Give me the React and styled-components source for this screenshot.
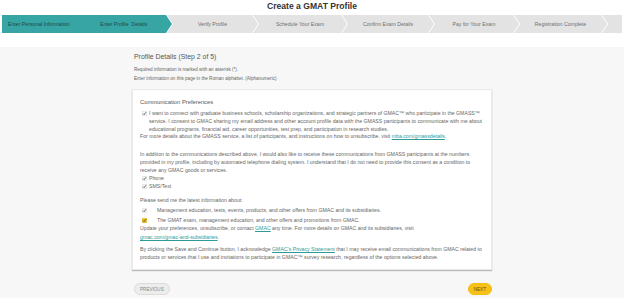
import styled, { createGlobalStyle } from "styled-components";

const GlobalStyle = createGlobalStyle`
  html, body {
    margin: 0;
    padding: 0;
    background: #f7f7f7;
  }
  body {
    font-family: "Liberation Sans", Arial, sans-serif;
    color: #666;
  }
`;

const steps = [
  { label: "Enter Personal Information", width: 92, active: true, tip: false, notch: false, joined: true, left: true },
  { label: "Enter Profile\u00a0 Details", width: 78, active: true, tip: true, notch: false, joined: true, left: true },
  { label: "Verify Profile", width: 91, tip: true, notch: true },
  { label: "Schedule Your Exam", width: 94, tip: true, notch: true },
  { label: "Confirm Exam Details", width: 92, tip: true, notch: true },
  { label: "Pay for Your Exam", width: 90, tip: true, notch: true },
  { label: "Registration Complete", width: 93, tip: true, notch: true },
];

const arrow = (notch, tip) =>
  `polygon(0 0, ${
    tip ? "calc(100% - 6px) 0, 100% 50%, calc(100% - 6px) 100%" : "100% 0, 100% 100%"
  }, 0 100%${notch ? ", 6px 50%" : ""})`;

export default function App() {
  return (
    <>
      <GlobalStyle />
      <Header>
        <Title>Create a GMAT Profile</Title>
        <Stepper>
          {steps.map((s) => (
            <Step
              key={s.label}
              $width={s.width}
              $active={s.active}
              $tip={s.tip}
              $notch={s.notch}
              $joined={s.joined}
              $left={s.left}
            >
              {s.label}
            </Step>
          ))}
          <Step $grow $notch />
        </Stepper>
      </Header>

      <Main>
        <Column>
          <Heading>Profile Details (Step 2 of 5)</Heading>
          <Note $top={5}>Required information is marked with an asterisk (*).</Note>
          <Note $top={3}>Enter information on this page in the Roman alphabet. (Alphanumeric)</Note>

          <Card>
            <CardTitle>Communication Preferences</CardTitle>
            <Check $indent={7}>
              <Box />
              <span>
                I want to connect with graduate business schools, scholarship organizations, and strategic
                partners of GMAC™ who participate in the GMASS™ service. I consent to GMAC sharing my email
                address and other account profile data with the GMASS participants to communicate with me
                about educational programs, financial aid, career opportunities, test prep, and participation
                in research studies.
              </span>
            </Check>
            <Para>
              For more details about the GMASS service, a list of participants, and instructions on how to
              unsubscribe, visit <Link>mba.com/gmassdetails</Link>.
            </Para>

            <Para $top={10}>
              In addition to the communications described above, I would also like to receive these
              communications from GMASS participants at the numbers provided in my profile, including by
              automated telephone dialing system. I understand that I do not need to provide this consent as
              a condition to receive any GMAC goods or services.
            </Para>
            <Check $indent={7} $top={0.4}>
              <Box />
              <span>Phone</span>
            </Check>
            <Check $indent={7}>
              <Box />
              <span>SMS/Text</span>
            </Check>

            <Para $top={6.3}>Please send me the latest information about:</Para>
            <Check $indent={15} $top={2.2}>
              <Box />
              <span>Management education, tests, events, products, and other offers from GMAC and its subsidiaries.</span>
            </Check>
            <Check $indent={15} $top={2.2}>
              <Box $yellow />
              <span>The GMAT exam, management education, and other offers and promotions from GMAC.</span>
            </Check>
            <Para $lh={8.8} $top={-0.5}>
              Update your preferences, unsubscribe, or contact <Link>GMAC</Link> any time. For more details on
              GMAC and its subsidiaries, visit
              <br />
              <Link>gmac.com/gmac-and-subsidiaries</Link>.
            </Para>
            <Para $top={4}>
              By clicking the Save and Continue button, I acknowledge <Link>GMAC's Privacy Statement</Link>{" "}
              that I may receive email communications from GMAC related to products or services that I use and
              invitations to participate in GMAC™ survey research, regardless of the options selected above.
            </Para>
          </Card>

          <Actions>
            <Button>PREVIOUS</Button>
            <Button $primary>NEXT</Button>
          </Actions>
        </Column>
      </Main>
    </>
  );
}

function Box({ $yellow }) {
  return (
    <BoxWrap>
      <svg width="5" height="5" viewBox="0 0 10 10">
        <rect
          x="0.5"
          y="0.5"
          width="9"
          height="9"
          rx="1"
          fill={$yellow ? "#f4c01a" : "#fff"}
          stroke={$yellow ? "#d1a313" : "#bbb"}
        />
        <path d="M2.2 5.2 L4.2 7.2 L7.9 2.6" fill="none" stroke="#444" strokeWidth="1.8" />
      </svg>
    </BoxWrap>
  );
}

const Header = styled.header`
  background: #fff;
  padding: 0 2px 14px;
`;

const Title = styled.h1`
  margin: 0;
  text-align: center;
  font-size: 8.6px;
  line-height: 12px;
  font-weight: 700;
  color: #333;
`;

const Stepper = styled.div`
  display: flex;
  margin-top: 3px;
  height: 18px;
`;

const Step = styled.div`
  flex: ${(p) => (p.$grow ? 1 : "none")};
  width: ${(p) => (p.$width ? `${p.$width}px` : "auto")};
  height: 100%;
  margin-left: ${(p) => (p.$joined ? 0 : -5)}px;
  background: ${(p) => (p.$active ? "#37a5a4" : "#e3e3e3")};
  color: ${(p) => (p.$active ? "#1d4b4a" : "#707070")};
  clip-path: ${(p) => arrow(p.$notch, p.$tip)};
  display: flex;
  align-items: center;
  justify-content: ${(p) => (p.$left ? "flex-start" : "center")};
  padding-left: ${(p) => (p.$left ? 6 : 0)}px;
  box-sizing: border-box;
  font-size: 5.2px;
  white-space: pre;
`;

const Main = styled.main`
  padding: 5px 0 0;
`;

const Column = styled.div`
  width: 360px;
  margin: 0 auto;
`;

const Heading = styled.h2`
  margin: 0 0 0 2px;
  font-size: 6.9px;
  line-height: 10px;
  font-weight: 400;
  color: #555;
`;

const Note = styled.p`
  margin: ${(p) => p.$top}px 0 0 2px;
  font-size: 4.6px;
  line-height: 6px;
`;

const Card = styled.section`
  margin-top: 7px;
  background: #fff;
  border: 1px solid #e9e9e9;
  box-shadow: 0 1px 1px rgba(0, 0, 0, 0.25);
  padding: 8px 8px 8px 7px;
  font-size: 5.2px;
  line-height: 7.8px;
`;

const CardTitle = styled.h3`
  margin: 0 0 4px;
  font-size: 5.8px;
  line-height: 8px;
  font-weight: 400;
  color: #555;
`;

const Check = styled.div`
  display: grid;
  grid-template-columns: ${(p) => p.$indent}px 1fr;
  margin-top: ${(p) => p.$top || 0}px;
  padding-left: 2px;
`;

const BoxWrap = styled.span`
  display: flex;
  height: 7.8px;
  align-items: center;
`;

const Para = styled.p`
  margin: ${(p) => p.$top || 0}px 0 0;
  line-height: ${(p) => (p.$lh ? `${p.$lh}px` : "inherit")};
`;

const Link = styled.a`
  color: #2e9a99;
  text-decoration: underline;
`;

const Actions = styled.div`
  display: flex;
  justify-content: space-between;
  align-items: center;
  margin-top: 13px;
  padding-left: 2px;
`;

const Button = styled.button`
  font-family: "Liberation Sans", Arial, sans-serif;
  font-size: 4.6px;
  height: 12px;
  padding: 0 5px;
  border-radius: 6px;
  border: 1px solid ${(p) => (p.$primary ? "#f3bd12" : "#dcdcdc")};
  background: ${(p) => (p.$primary ? "#f6c118" : "#ededed")};
  color: ${(p) => (p.$primary ? "#6a5000" : "#888")};
  cursor: pointer;
`;
